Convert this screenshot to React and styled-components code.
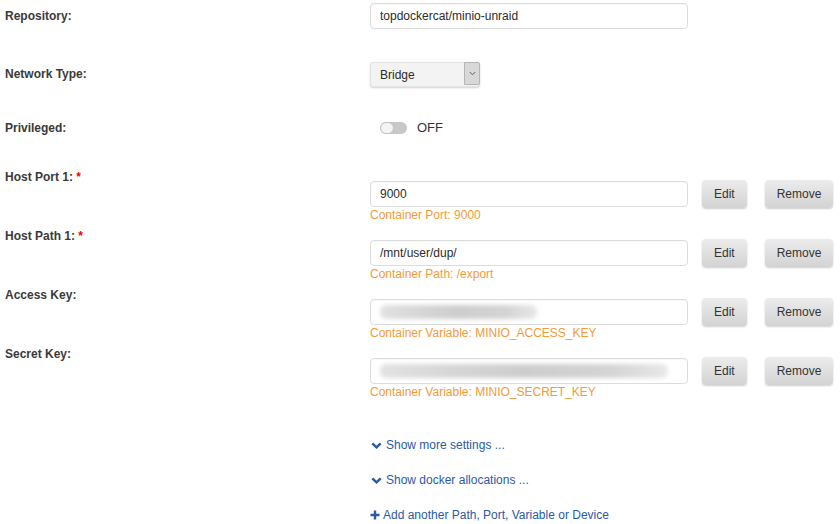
import React from 'react';
import styled, { createGlobalStyle } from 'styled-components';

const GlobalStyle = createGlobalStyle`
  body {
    margin: 0;
    background: #fff;
  }
`;

const Page = styled.div`
  padding: 3px 0 0 5px;
  font-family: "Liberation Sans", Arial, sans-serif;
  font-size: 12px;
  line-height: 14px;
  color: #333;
`;

const Row = styled.div`
  display: grid;
  grid-template-columns: 365px 1fr;
  align-items: ${p => (p.$center ? 'center' : 'start')};
  margin-bottom: ${p => p.$gap || 0}px;
`;

const Label = styled.div`
  font-weight: bold;
  color: #3a3a3a;
  padding-top: ${p => p.$top || 0}px;
`;

const Required = styled.span`
  color: #e00;
`;

const Content = styled.div`
  padding-top: ${p => p.$top || 0}px;
`;

const Line = styled.div`
  display: flex;
  align-items: center;
  height: 26px;
`;

const Field = styled.div`
  box-sizing: border-box;
  flex: none;
  width: 318px;
  height: 26px;
  padding: 0 9px;
  display: flex;
  align-items: center;
  border: 1px solid #dcdcdc;
  border-radius: 4px;
  background: #fff;
  color: #2b2b2b;
  box-shadow: inset 0 1px 1px rgba(0, 0, 0, 0.03);
`;

const Masked = styled.span`
  display: block;
  width: ${p => p.$width}px;
  height: 14px;
  border-radius: 6px;
  background: linear-gradient(90deg, #e2e2e2 0%, #d6d6d6 25%, #cdcdcd 50%, #d4d4d4 80%, #e8e8e8 100%);
  filter: blur(2px);
`;

const Button = styled.button`
  box-sizing: border-box;
  flex: none;
  height: 28px;
  padding: 0 12px;
  margin-left: ${p => p.$gap}px;
  border: none;
  border-radius: 4px;
  background: linear-gradient(to bottom, #ececec, #d3d3d3);
  box-shadow: 0 1px 2px rgba(0, 0, 0, 0.2);
  font-family: inherit;
  font-size: 12px;
  color: #333;
  cursor: pointer;
`;

const Note = styled.div`
  margin-top: 1px;
  color: #f29b38;
`;

const Select = styled.div`
  box-sizing: border-box;
  width: 110px;
  height: 25px;
  display: flex;
  border: 1px solid #e4e4e4;
  border-radius: 3px;
  background: #f3f3f3;
  box-shadow: 0 1px 2px rgba(0, 0, 0, 0.18);
  color: #2b2b2b;
`;

const SelectText = styled.span`
  flex: 1;
  display: flex;
  align-items: center;
  padding-left: 9px;
`;

const SelectArrow = styled.span`
  width: 14px;
  display: flex;
  align-items: center;
  justify-content: center;
  background: #d8d8d8;
  border: 1px solid #b5b5b5;
  border-radius: 0 2px 2px 0;
  margin: -1px -1px 1px 0;
`;

const Switch = styled.div`
  display: flex;
  align-items: center;
  gap: 10px;
  padding-left: 10px;
  font-size: 13px;
  color: #333;
`;

const Track = styled.span`
  position: relative;
  width: 27px;
  height: 12px;
  border-radius: 6px;
  background: #c8c8c8;

  &::before {
    content: '';
    position: absolute;
    left: 0;
    top: 0;
    box-sizing: border-box;
    width: 14px;
    height: 12px;
    border-radius: 6px;
    border: 1px solid #c2c2c2;
    background: #f4f4f4;
  }
`;

const Links = styled.div`
  margin: 39px 0 0 365px;
  display: flex;
  flex-direction: column;
  gap: 21px;
`;

const LinkItem = styled.a`
  display: flex;
  align-items: center;
  gap: ${p => p.$gap}px;
  padding-left: ${p => p.$indent}px;
  color: #2a5aa8;
  text-decoration: none;
  cursor: pointer;
`;

const Chevron = () => (
  <svg width="11" height="7" viewBox="0 0 11 7">
    <polyline points="1.3,1.3 5.5,5.3 9.7,1.3" fill="none" stroke="#2a5aa8" strokeWidth="2.5" />
  </svg>
);

const Plus = () => (
  <svg width="10" height="10" viewBox="0 0 10 10">
    <path d="M5 0.5v9M0.5 5h9" stroke="#2a5aa8" strokeWidth="2.4" />
  </svg>
);

const configs = [
  { label: 'Host Port 1:', required: true, value: '9000', note: 'Container Port: 9000' },
  { label: 'Host Path 1:', required: true, value: '/mnt/user/dup/', note: 'Container Path: /export' },
  { label: 'Access Key:', masked: 157, note: 'Container Variable: MINIO_ACCESS_KEY' },
  { label: 'Secret Key:', masked: 288, note: 'Container Variable: MINIO_SECRET_KEY' },
];

export default function App() {
  return (
    <>
      <GlobalStyle />
      <Page>
        <Row $gap={33}>
          <Label $top={6}>Repository:</Label>
          <Content>
            <Field>topdockercat/minio-unraid</Field>
          </Content>
        </Row>

        <Row $gap={34}>
          <Label $top={5}>Network Type:</Label>
          <Content>
            <Select>
              <SelectText>Bridge</SelectText>
              <SelectArrow>
                <svg width="7" height="5" viewBox="0 0 7 5">
                  <polyline points="0.8,1 3.5,3.8 6.2,1" fill="none" stroke="#555" strokeWidth="0.9" />
                </svg>
              </SelectArrow>
            </Select>
          </Content>
        </Row>

        <Row $gap={35} $center>
          <Label>Privileged:</Label>
          <Switch>
            <Track />
            OFF
          </Switch>
        </Row>

        {configs.map(c => (
          <Row key={c.label} $gap={7}>
            <Label>
              {c.label}
              {c.required && <Required> *</Required>}
            </Label>
            <Content $top={11}>
              <Line>
                <Field>{c.masked ? <Masked $width={c.masked} /> : c.value}</Field>
                <Button $gap={14}>Edit</Button>
                <Button $gap={18}>Remove</Button>
              </Line>
              <Note>{c.note}</Note>
            </Content>
          </Row>
        ))}

        <Links>
          <LinkItem $gap={4} $indent={1}>
            <Chevron />
            Show more settings ...
          </LinkItem>
          <LinkItem $gap={4} $indent={1}>
            <Chevron />
            Show docker allocations ...
          </LinkItem>
          <LinkItem $gap={3} $indent={0}>
            <Plus />
            Add another Path, Port, Variable or Device
          </LinkItem>
        </Links>
      </Page>
    </>
  );
}
